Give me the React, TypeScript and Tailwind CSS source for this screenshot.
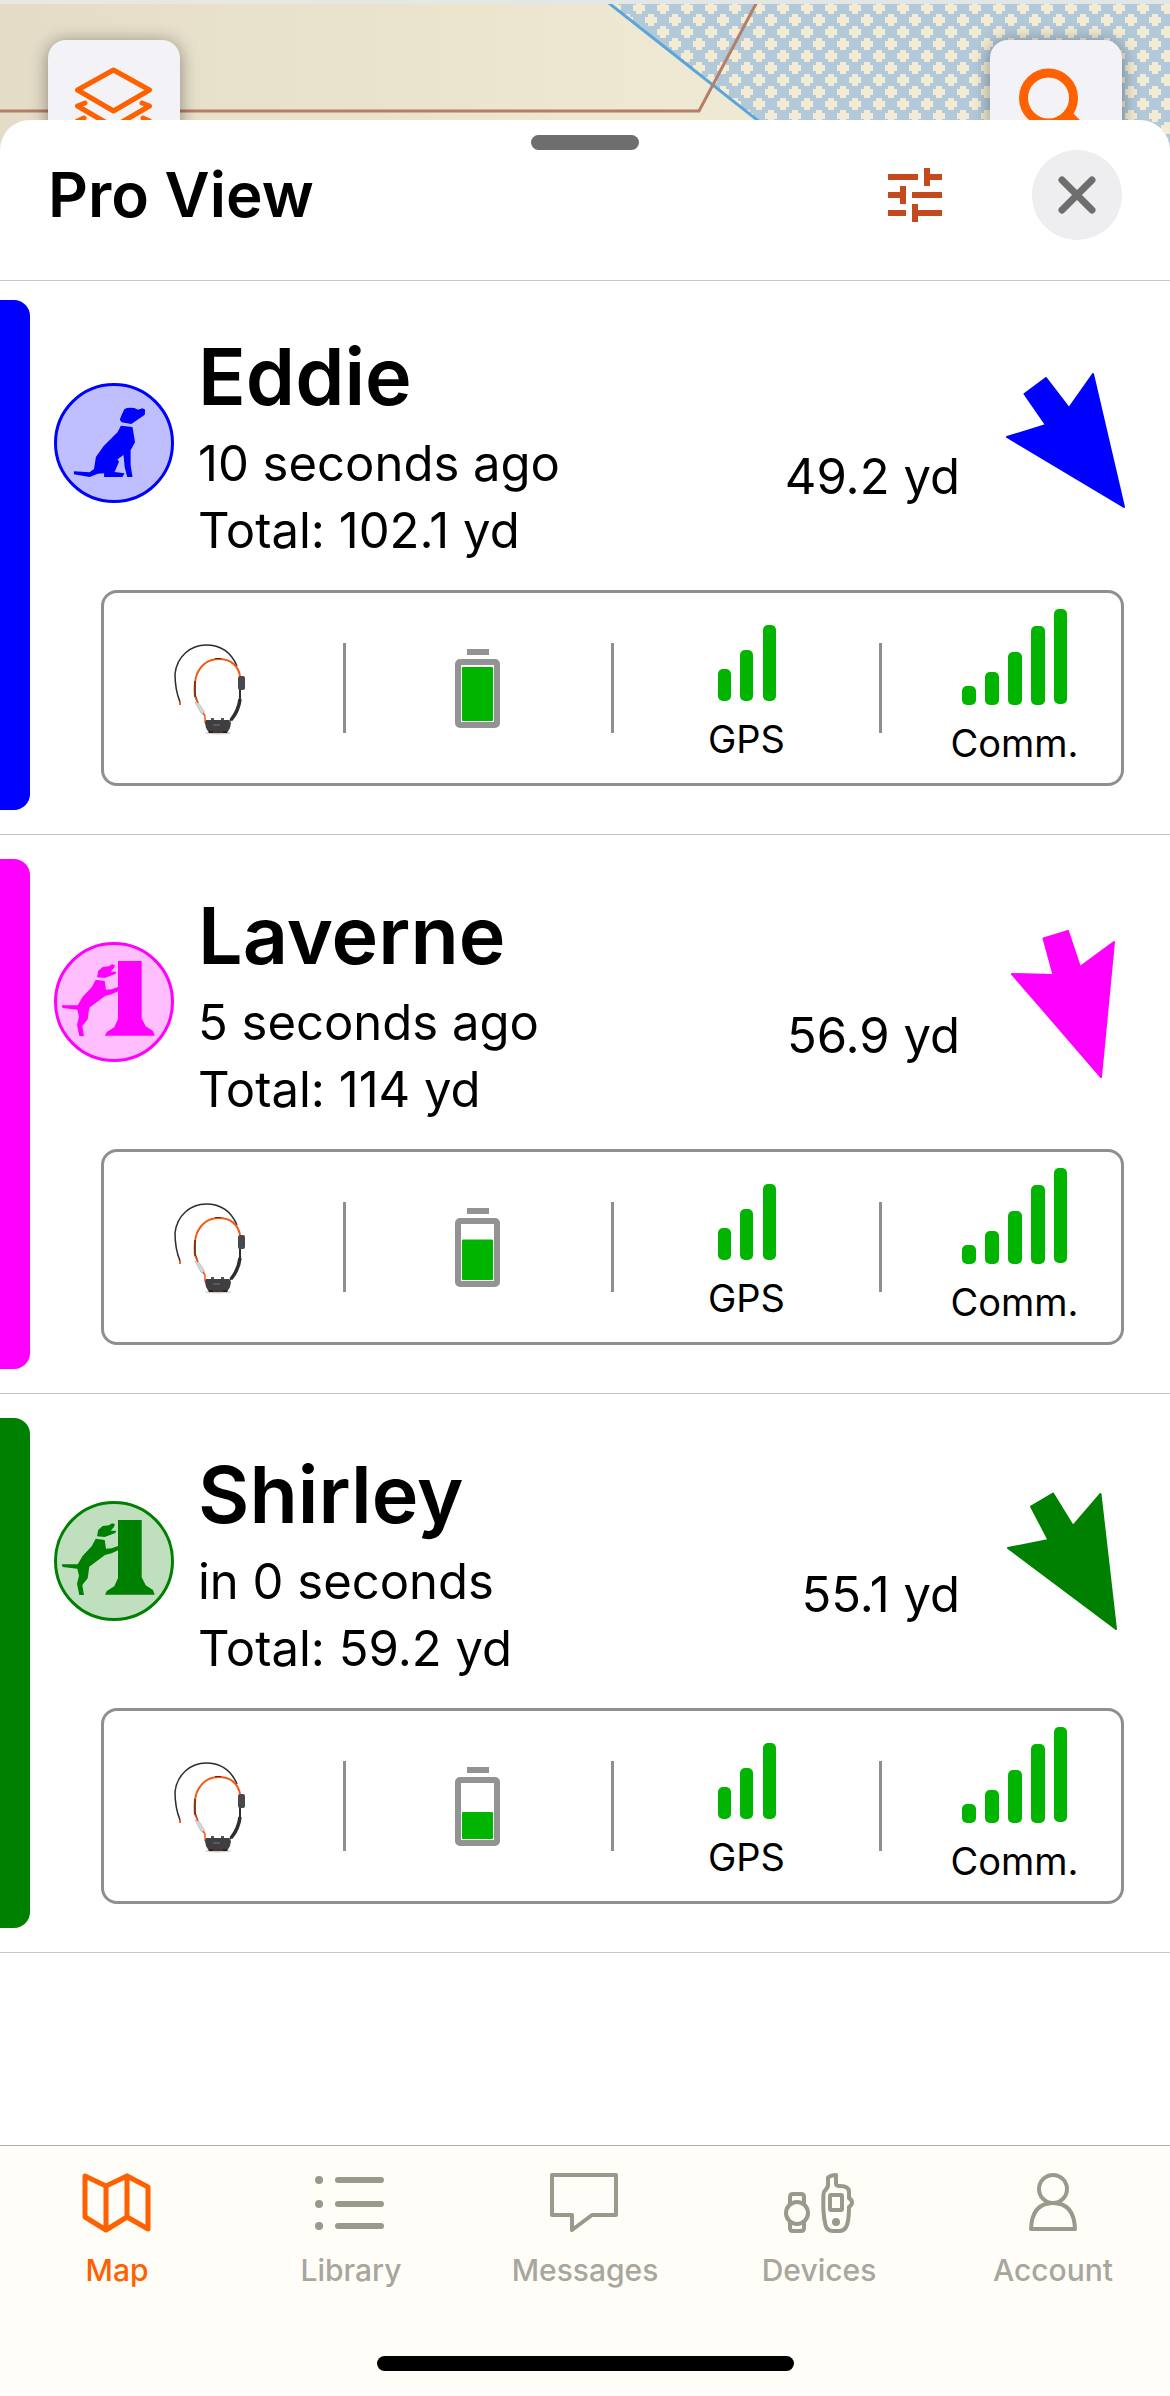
import { clsx } from "clsx";
import type { ReactNode } from "react";
import { MdTune } from "react-icons/md";

type Pose = "sitting" | "treed";

type Dog = {
	arrow: string;
	battery: number;
	color: string;
	distance: string;
	lastSeen: string;
	name: string;
	pose: Pose;
	total: string;
};

const dogs: Dog[] = [
	{
		arrow: "24.5,24 46,8 69,38 93,4 124,137 7,67 46,55",
		battery: 100,
		color: "#0000ff",
		distance: "49.2 yd",
		lastSeen: "10 seconds ago",
		name: "Eddie",
		pose: "sitting",
		total: "102.1 yd",
	},
	{
		arrow: "43.5,9.5 68,2 80,38 114,13 101,148 12,45 53.5,46",
		battery: 75,
		color: "#ff00ff",
		distance: "56.9 yd",
		lastSeen: "5 seconds ago",
		name: "Laverne",
		pose: "treed",
		total: "114 yd",
	},
	{
		arrow: "31,18.5 53,5.5 73,38 100.5,6 116,141 8,60 48.5,52",
		battery: 50,
		color: "#008000",
		distance: "55.1 yd",
		lastSeen: "in 0 seconds",
		name: "Shirley",
		pose: "treed",
		total: "59.2 yd",
	},
];

function MapBackdrop() {
	return (
		<svg
			className="absolute inset-0 size-full"
			viewBox="0 0 1170 160"
			preserveAspectRatio="xMidYMin slice"
			aria-hidden="true"
		>
			<defs>
				<linearGradient id="land" x1="0" x2="1" y1="0" y2="0">
					<stop offset="0" stopColor="#e4dcc7" />
					<stop offset="0.35" stopColor="#ebe4cd" />
					<stop offset="0.6" stopColor="#efe8d3" />
				</linearGradient>
				<linearGradient id="edge" x1="0" x2="1" y1="0" y2="0">
					<stop offset="0" stopColor="#ebe8df" />
					<stop offset="0.5" stopColor="#e3e7e5" />
					<stop offset="1" stopColor="#e1e6e7" />
				</linearGradient>
				<pattern id="marsh" x="627" y="-4" width="24" height="24" patternUnits="userSpaceOnUse">
					<rect width="24" height="24" fill="#b2c9da" />
					<path
						d="M9 6h6v3h3v6h-3v3H9v-3H6V9h3zM0 18h3v3h3v3H0zM18 24v-3h3v-3h3v6zM0 0h6v3H3v3H0zM24 0h-6v3h3v3h3z"
						fill="#f3ebd3"
					/>
				</pattern>
			</defs>
			<rect width="1170" height="160" fill="url(#land)" />
			<path d="M605 0H1170V134H775z" fill="url(#marsh)" />
			<path d="M1100 134h70v26h-70z" fill="#b2c9da" />
			<path d="M605 0 775 134" stroke="#5ba5d8" strokeWidth="3" />
			<path d="M0 111H699L758 0" fill="none" stroke="#b27f69" strokeWidth="3" />
			<rect width="1170" height="4" fill="url(#edge)" />
		</svg>
	);
}

function MapButton(props: { children: ReactNode; label: string }) {
	const { children, label } = props;

	return (
		<button
			type="button"
			aria-label={label}
			className="size-[132px] rounded-[18px] bg-[#f3f2f7] shadow-[0_2px_18px_rgba(0,0,0,0.4)]"
		>
			<svg
				viewBox="0 0 132 132"
				className="size-full"
				fill="none"
				stroke="#ff6100"
				strokeLinecap="round"
				strokeLinejoin="round"
			>
				{children}
			</svg>
		</button>
	);
}

function DogIcon(props: { color: string; pose: Pose }) {
	const { color, pose } = props;

	return (
		<svg viewBox="0 0 120 120" className="size-[120px] shrink-0" fill={color} aria-hidden="true">
			<circle cx="60" cy="60" r="58.5" fillOpacity="0.25" stroke={color} strokeWidth="3" />
			{pose === "sitting" ? (
				<>
					<path d="M70.3 26.3 73 25 76 24.7 80.3 25 84 26.7 88.5 25.3 91.1 26.7 90.8 31.7 77.3 41 67.6 39.3 65.8 36.7 67.3 32.7z" />
					<path d="M66.9 42.7 78.5 44 81 59.3 76.6 67.3V82L78.5 94H73.2L70.6 83.7 69.5 72 63.5 76.3 65 78.7 60.6 89 70.6 90.3 68.4 94H50.1V90.3L43.8 90.7 35.6 94 19.9 91.3V88.3L35.6 89.3 40 86 41.9 74 49.7 63 63.5 49.3z" />
				</>
			) : (
				<>
					<path d="M64 19H87.7V76.3L91.7 84.3 99 89 100.7 93.7H51L52.7 90 60.3 85.3 64 77z" />
					<path d="M43 35.3 44.3 28.7 48.7 25 55 24.3 58 22.3 61 23.3 60 26 56.7 29.7 62.3 29.7 61.3 32 50.7 36z" />
					<path d="M41.7 37.7 50.7 39 52 47.7 57.7 47.3 64 45V49.3L57.7 52.3 51 54 35.3 65.7 33.7 77.3 28.3 84 30 94H25.3L23 82.7 25 74.7 23.3 67.7 8.7 66 7.7 63.3H23.7L28.7 54.7 37.7 45.3z" />
				</>
			)}
		</svg>
	);
}

function CollarIcon() {
	return (
		<svg viewBox="0 0 100 115" className="h-[115px] w-[100px]" fill="none" aria-hidden="true">
			<ellipse cx="57" cy="102" rx="13" ry="1.5" fill="#cfcfcf" />
			<path
				d="M19 71C15 61 14 51 14 43 16 25 30 14 45 14 59 14 70 21 76 35"
				stroke="#2c2c2e"
				strokeWidth="1.5"
			/>
			<path d="M19 71v3" stroke="#ff6100" strokeWidth="2" />
			<path
				d="M34 66C33 55 34 48 36 43 41 32 50 28 58 28 69 28 77 34 79 45"
				stroke="#f05a14"
				strokeWidth="2"
			/>
			<path d="M34 50v14l3 8" stroke="#5a2a18" strokeWidth="1.5" />
			<path d="M54 27.5h6" stroke="#5a2a18" />
			<path d="M34 71 37 71 43 80 43 84 40 82z" fill="#d6d6d6" stroke="#c4c4c4" />
			<path d="M34 66l3 6M42 82l2 3v7" stroke="#f05a14" strokeWidth="1.5" />
			<path d="M79 57V68C78 77 75 83 69 90" stroke="#2e2e30" strokeWidth="2" />
			<path d="M79 68C78 77 75 83 70 89" stroke="#2e2e30" strokeWidth="3.5" />
			<rect x="77" y="45" width="7" height="14" rx="2" fill="#48484a" />
			<path d="M45 89h23l2 3-1 5-3 5H48l-3-5-1-5z" fill="#3f3f41" />
			<path d="M50 88h3M60 88h3M48 101h4M62 101h4" stroke="#1c1c1e" strokeWidth="1.5" />
			<path d="M52 94h7" stroke="#77777a" />
			<path d="M53 101h8" stroke="#6b2016" />
		</svg>
	);
}

function BatteryIcon(props: { level: number }) {
	const fillHeight = (54 * props.level) / 100;

	return (
		<svg viewBox="0 0 48 80" className="h-[80px] w-[48px]" role="img" aria-label={`Battery ${props.level}%`}>
			<rect x="12" y="1" width="22" height="6" fill="#939393" />
			<rect x="3" y="14" width="39" height="63" rx="2" fill="none" stroke="#939393" strokeWidth="6" />
			<rect x="7" y={73 - fillHeight} width="31" height={fillHeight} rx="1" fill="#00b400" />
		</svg>
	);
}

function StatusDivider() {
	return <span className="h-[90px] w-[3px] shrink-0 bg-[#8e8e93]" />;
}

function StatusCell(props: { children: ReactNode; label?: string }) {
	const { children, label } = props;

	return (
		<div className="flex flex-1 flex-col items-center gap-[14px]">
			{children}
			{label && <span className="text-[38px] leading-[48px]">{label}</span>}
		</div>
	);
}

function DogRow(props: { dog: Dog }) {
	const { dog } = props;

	return (
		<li className="flex border-b border-[#c6c6c8] py-6 first:pt-[19px]">
			<span className="w-[30px] shrink-0 rounded-r-[16px]" style={{ backgroundColor: dog.color }} />

			<div className="min-w-0 grow pt-[26px] pb-6">
				<div className="flex items-center pr-[38px] pl-6">
					<div className="pb-1">
						<DogIcon color={dog.color} pose={dog.pose} />
					</div>

					<div className="ml-6 grow">
						<h2 className="text-[79px] leading-[100px] font-semibold">{dog.name}</h2>
						<p className="mt-1 text-[49px] leading-[67px]">{dog.lastSeen}</p>
						<p className="text-[49px] leading-[67px]">Total: {dog.total}</p>
					</div>

					<p className="mt-[62px] mr-[40px] text-[49px] leading-[67px]">{dog.distance}</p>

					<svg viewBox="0 0 132 150" className="h-[150px] w-[132px] shrink-0" aria-hidden="true">
						<polygon
							points={dog.arrow}
							fill={dog.color}
							stroke={dog.color}
							strokeWidth="2"
							strokeLinejoin="round"
						/>
					</svg>
				</div>

				<div className="mt-[26px] mr-[46px] ml-[71px] h-[196px] rounded-[16px] border-3 border-[#8e8e93]">
					<div className="-mx-[26px] flex h-full items-center">
						<StatusCell>
							<CollarIcon />
						</StatusCell>
						<StatusDivider />
						<StatusCell>
							<BatteryIcon level={dog.battery} />
						</StatusCell>
						<StatusDivider />
						<StatusCell label="GPS">
							<svg viewBox="0 0 58 88" className="h-[88px] w-[58px]" fill="#00b400" aria-hidden="true">
								<rect x="0" y="56" width="13" height="32" rx="5" />
								<rect x="22" y="37" width="13" height="51" rx="5" />
								<rect x="45" y="12" width="13" height="76" rx="5" />
							</svg>
						</StatusCell>
						<StatusDivider />
						<StatusCell label="Comm.">
							<svg viewBox="0 0 106 96" className="h-[96px] w-[106px]" fill="#00b400" aria-hidden="true">
								<rect x="0" y="77" width="14" height="19" rx="5" />
								<rect x="23" y="63" width="14" height="33" rx="5" />
								<rect x="46" y="43" width="14" height="53" rx="5" />
								<rect x="69" y="17" width="14" height="79" rx="5" />
								<rect x="92" y="0" width="13" height="95" rx="5" />
							</svg>
						</StatusCell>
					</div>
				</div>
			</div>
		</li>
	);
}

const tabs: Array<{ icon: ReactNode; label: string }> = [
	{
		icon: (
			<path d="M4 5 25 15 46 5 67 16V58L46 46 25 59 4 46zM25 15V59M46 5V46" strokeWidth="5" />
		),
		label: "Map",
	},
	{
		icon: (
			<>
				<path d="M23 9H66M23 33H66M23 55H66" strokeWidth="6" />
				<path d="M4 9h.1M4 33h.1M4 55h.1" strokeWidth="8" />
			</>
		),
		label: "Library",
	},
	{
		icon: <path d="M3 4H67V44H43L23 59V44H3z" strokeWidth="4" />,
		label: "Messages",
	},
	{
		icon: (
			<>
				<circle cx="14" cy="42" r="11" strokeWidth="4" />
				<path d="M7 32V26q0-3 3-3h8q3 0 3 3v6M7 52v5q0 3 3 3h8q3 0 3-3v-5" strokeWidth="4" />
				<path
					d="M45 6.5q3-2.5 8-2.5V13q0 2 4 2 9 0 9 6v6q3 2 3 4.5T66 36q0 12-2 18-2 6-8 6H50q-6 0-7.500-6-3-12-2-31 0-2 2-4 3-3 2.500-6z"
					strokeWidth="4"
				/>
				<rect x="47" y="24" width="12" height="15" rx="1" strokeWidth="4" />
				<circle cx="53" cy="51" r="4" fill="currentColor" stroke="none" />
			</>
		),
		label: "Devices",
	},
	{
		icon: (
			<>
				<circle cx="36" cy="18" r="14" strokeWidth="4" />
				<path d="M14 58q1-26 22-26t22 26z" strokeWidth="4" />
			</>
		),
		label: "Account",
	},
];

function TabBar() {
	return (
		<footer className="border-t border-[#b1b1ab] bg-[#fefdf8] pt-[25px] pb-[25px]">
			<nav className="grid grid-cols-5">
				{tabs.map((tab, index) => (
					<a
						key={tab.label}
						href={`#${tab.label.toLowerCase()}`}
						aria-current={index === 0 ? "page" : undefined}
						className={clsx(
							"flex flex-col items-center gap-[17px]",
							index === 0 ? "text-[#ff6100]" : "text-[#9b988c]"
						)}
					>
						<svg
							viewBox="0 0 72 64"
							className="h-[64px] w-[72px]"
							fill="none"
							stroke="currentColor"
							strokeLinecap="round"
							strokeLinejoin="round"
							aria-hidden="true"
						>
							{tab.icon}
						</svg>
						<span
							className={clsx("text-[30px] leading-[36px] font-medium", index > 0 && "text-[#a9a69d]")}
						>
							{tab.label}
						</span>
					</a>
				))}
			</nav>
			<div className="mx-auto mt-[68px] h-[15px] w-[417px] rounded-full bg-black" />
		</footer>
	);
}

export default function App() {
	return (
		<div className="flex min-h-screen flex-col bg-white font-['Inter',sans-serif] text-black">
			<div className="relative h-[160px] overflow-hidden">
				<MapBackdrop />
				<div className="relative flex justify-between px-12 pt-10">
					<MapButton label="Map layers">
						<g strokeWidth="5">
							<path d="M65.5 30 101.5 50 65.5 71 29.5 50z" />
							<path d="M37 63 29.5 66 65.5 87 101.5 66 94 63M36 78 29.5 81 65.5 102 101.5 81 95 78" />
						</g>
					</MapButton>
					<MapButton label="Search">
						<circle cx="58.5" cy="58" r="25" strokeWidth="9" />
						<path d="M78 76 100 98" strokeWidth="11" />
					</MapButton>
				</div>
			</div>

			<main className="relative -mt-10 grow rounded-t-[30px] bg-white">
				<div className="mx-auto h-[30px] w-[108px] pt-[15px]">
					<div className="h-[15px] rounded-full bg-[#6e6e6e]" />
				</div>

				<header className="flex items-center border-b border-[#c6c6c8] px-12 pb-10">
					<h1 className="grow text-[62px] leading-[90px] font-semibold">Pro View</h1>
					<button type="button" aria-label="Filter" className="mr-[81px] text-[#c44a1e]">
						<MdTune className="size-[72px]" />
					</button>
					<button
						type="button"
						aria-label="Close"
						className="flex size-[90px] items-center justify-center rounded-full bg-[#eeeef0]"
					>
						<svg viewBox="0 0 40 40" className="size-[40px]" aria-hidden="true">
							<path d="M5 5 35 35M35 5 5 35" stroke="#6e6e6e" strokeWidth="7" strokeLinecap="round" />
						</svg>
					</button>
				</header>

				<ul>
					{dogs.map((dog) => (
						<DogRow key={dog.name} dog={dog} />
					))}
				</ul>
			</main>

			<TabBar />
		</div>
	);
}
